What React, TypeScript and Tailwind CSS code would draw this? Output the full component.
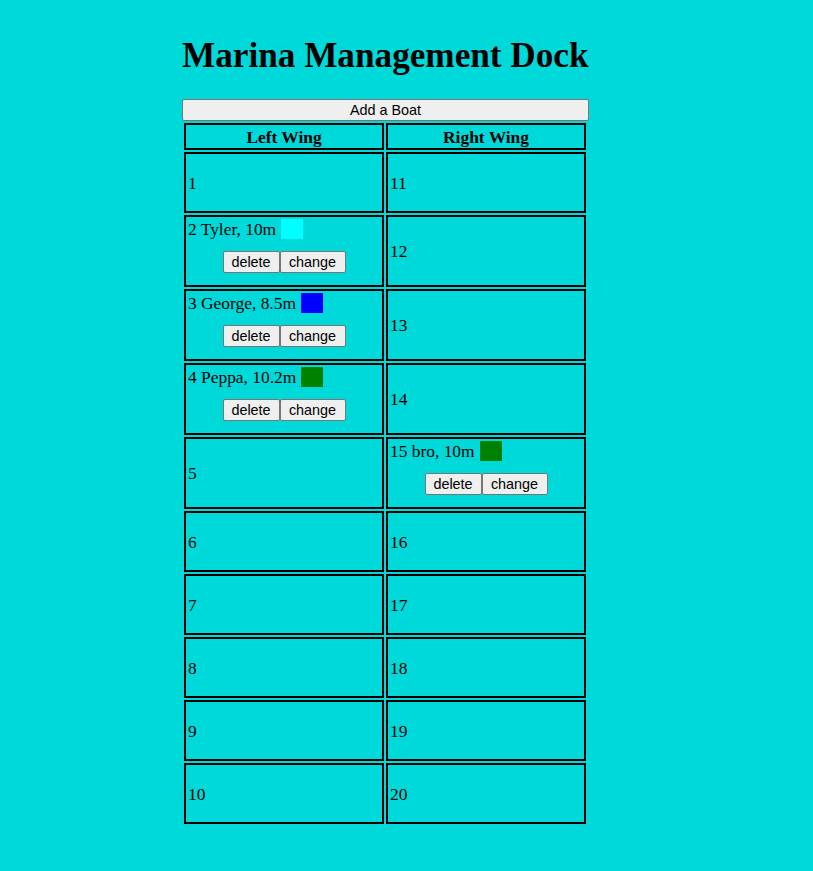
import React from "react";

type Boat = { name: string; length: string; color: string };

const boats: Record<number, Boat> = {
  2: { name: "Tyler", length: "10m", color: "bg-[#00ffff]" },
  3: { name: "George", length: "8.5m", color: "bg-[#0000ff]" },
  4: { name: "Peppa", length: "10.2m", color: "bg-[#008000]" },
  15: { name: "bro", length: "10m", color: "bg-[#008000]" },
};

const btn =
  "h-[22px] border border-[#767676] bg-[#efefef] rounded-[2px] text-[14.4px] leading-none text-black font-['Liberation_Sans',Arial,sans-serif]";

function Slot({ n, tall }: { n: number; tall: boolean }) {
  const boat = boats[n];
  const h = tall ? "h-[72px]" : "h-[61px]";
  if (!boat) {
    return (
      <div className={`${h} border-2 border-black pl-[2px] flex items-center`}>
        <span>{n}</span>
      </div>
    );
  }
  return (
    <div className={`${h} border-2 border-black pt-px flex flex-col`}>
      <div className="h-[22px] pl-[2px] flex items-center">
        <span>
          {n} {boat.name}, {boat.length}
        </span>
        <span className={`ml-[5px] w-[22px] h-[20px] ${boat.color}`} />
      </div>
      <div className="mt-[11px] flex justify-center">
        <button className={`${btn} w-[57px]`}>delete</button>
        <button className={`${btn} w-[66px]`}>change</button>
      </div>
    </div>
  );
}

export default function App() {
  const rows = Array.from({ length: 10 }, (_, i) => i + 1);

  return (
    <div className="min-h-screen w-full bg-[#00d9d9] text-black font-['Liberation_Serif','Times_New_Roman',serif] pt-[36px]">
      <div className="ml-[182px] w-[407px]">
        <h1 className="text-[35.2px] font-bold leading-[40px] whitespace-nowrap mb-[23px]">
          Marina Management Dock
        </h1>

        <button className={`${btn} w-full block`}>Add a Boat</button>

        {/* Dock table */}
        <div className="grid grid-cols-[200px_200px] gap-[2px] p-[2px] text-[17.4px] leading-[20px]">
          <div className="h-[27px] border-2 border-black flex items-center justify-center font-bold">
            Left Wing
          </div>
          <div className="h-[27px] border-2 border-black flex items-center justify-center font-bold">
            Right Wing
          </div>
          {rows.map((n) => {
            const tall = !!boats[n] || !!boats[n + 10];
            return (
              <React.Fragment key={n}>
                <Slot n={n} tall={tall} />
                <Slot n={n + 10} tall={tall} />
              </React.Fragment>
            );
          })}
        </div>
      </div>
    </div>
  );
}
